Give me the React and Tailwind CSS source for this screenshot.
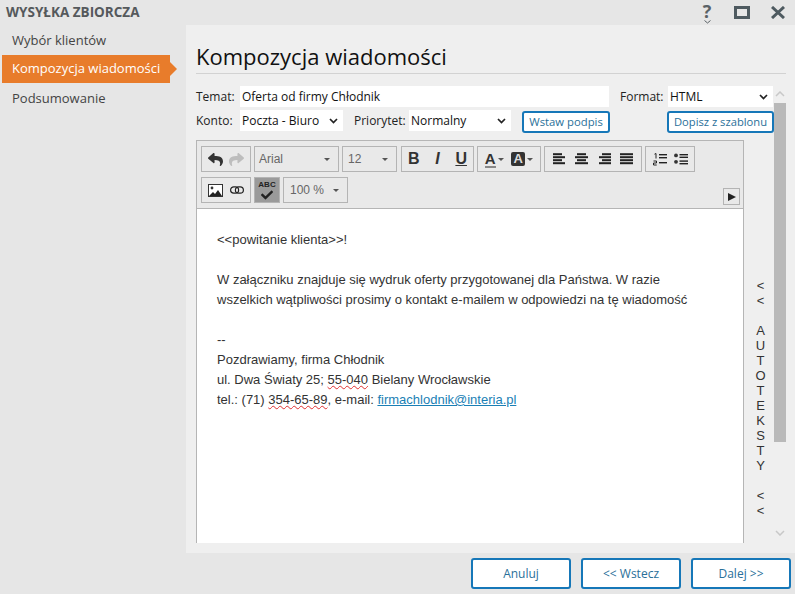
import React from "react";
import { FaReply, FaShare, FaCheck } from "react-icons/fa";

const ui = "font-['Open_Sans',sans-serif]";

const Chevron = ({ className = "" }) => (
  <svg width="9" height="6" viewBox="0 0 9 6" className={className}>
    <path d="M1 1l3.5 3.5L8 1" fill="none" stroke="#222" strokeWidth="1.7" />
  </svg>
);

const Select = ({ value, className }) => (
  <div className={`h-[21px] bg-white flex items-center justify-between pl-[2px] pr-[5px] text-[12px] text-[#111] ${className}`}>
    <span>{value}</span>
    <Chevron />
  </div>
);

const LinkButton = ({ children, className }) => (
  <button className={`bg-white border-2 border-[#1677b8] rounded-[3px] text-[#2a7099] flex items-center justify-center ${className}`}>
    {children}
  </button>
);

const Group = ({ children, className = "" }) => (
  <div className={`h-[26px] border border-[#b4b4b4] flex items-center ${className}`}>{children}</div>
);

const Caret = ({ color = "#555" }) => (
  <svg width="6" height="3" viewBox="0 0 6 3"><path d="M0 0h6L3 3z" fill={color} /></svg>
);

const Drop = ({ label, className }) => (
  <Group className={`justify-between pl-[4px] pr-[8px] text-[12px] text-[#666] font-['Liberation_Sans',sans-serif] ${className}`}>
    <span>{label}</span>
    <Caret />
  </Group>
);

// four bars, offsets differ per alignment
const AlignIcon = ({ bars }) => (
  <svg width="13" height="12" viewBox="0 0 13 12">
    {bars.map(([x, w], i) => (
      <rect key={i} x={x} y={i * 3 + 0.2} width={w} height="2" fill="#222" />
    ))}
  </svg>
);

const ImageIcon = () => (
  <svg width="15" height="13" viewBox="0 0 15 13">
    <rect x="0.5" y="0.5" width="14" height="12" fill="#fff" stroke="#333" />
    <circle cx="4" cy="4" r="1.4" fill="#333" />
    <path d="M1 12l4-4 2 2 3-4 4 6z" fill="#222" />
  </svg>
);

const LinkIcon = () => (
  <svg width="14" height="8" viewBox="0 0 14 8" fill="none" stroke="#222" strokeWidth="1.2">
    <rect x="0.6" y="0.8" width="8" height="6.4" rx="3.2" />
    <rect x="5.4" y="0.8" width="8" height="6.4" rx="3.2" />
  </svg>
);

const NumList = () => (
  <svg width="14" height="13" viewBox="0 0 14 13">
    <path d="M1.5 1.2L3 .5v5" fill="none" stroke="#222" strokeWidth="1" />
    <path d="M.5 8h3v2h-3v2h3.2" fill="none" stroke="#222" strokeWidth="1" />
    <rect x="6" y="1" width="8" height="1.4" fill="#222" />
    <rect x="6" y="4" width="8" height="1.4" fill="#222" />
    <rect x="6" y="9" width="8" height="1.4" fill="#222" />
  </svg>
);

const BulList = () => (
  <svg width="14" height="12" viewBox="0 0 14 12">
    <circle cx="2" cy="2.4" r="1.9" fill="#333" />
    <circle cx="2" cy="8.8" r="1.9" fill="#333" />
    <rect x="5.5" y="1" width="8.5" height="1.4" fill="#222" />
    <rect x="5.5" y="3.6" width="8.5" height="1.4" fill="#222" />
    <rect x="5.5" y="7.4" width="8.5" height="1.4" fill="#222" />
    <rect x="5.5" y="10" width="8.5" height="1.4" fill="#222" />
  </svg>
);

const sideText = ["<", "<", "", "A", "U", "T", "O", "T", "E", "K", "S", "T", "Y", "", "<", "<"];

export default function App() {
  return (
    <div className={`w-[795px] h-[594px] overflow-hidden bg-[#e6e6e6] flex flex-col ${ui}`}>
      <div className="h-[25px] flex items-center justify-between pl-[6px] pr-[10px] shrink-0">
        <span className="text-[13.5px] font-bold text-[#55595c]">WYSYŁKA ZBIORCZA</span>
        <div className="flex items-center">
          <div className="w-[14px] flex flex-col items-center mr-[20px]">
            <span className="text-[18px] leading-[18px] font-bold text-[#5a6266]">?</span>
            <svg width="7" height="4" viewBox="0 0 7 4"><path d="M.5.5l3 2.5 3-2.5" fill="none" stroke="#5a6266" /></svg>
          </div>
          <div className="w-[16px] h-[13px] border-[3px] border-[#4e5a60] mr-[21px]" />
          <svg width="14" height="13" viewBox="0 0 14 13"><path d="M1 1l12 11M13 1L1 12" stroke="#4e5a60" strokeWidth="3" /></svg>
        </div>
      </div>

      <div className="flex-1 min-h-0 flex">
        <nav className="w-[186px] shrink-0 pt-[2px] text-[13px] text-[#444]">
          <div className="h-[28px] pl-[12px] flex items-center">Wybór klientów</div>
          <div className="relative h-[28px] ml-[2px] w-[168px] pl-[10px] flex items-center bg-[#e87c2b] text-white">
            Kompozycja wiadomości
            <span className="absolute left-full top-[7px] border-y-[7px] border-y-transparent border-l-[7px] border-l-[#e87c2b]" />
          </div>
          <div className="h-[32px] pl-[12px] flex items-center">Podsumowanie</div>
        </nav>

        <main className="flex-1 bg-[#efefef] pl-[10px] pr-[9px] flex flex-col min-w-0 overflow-hidden">
          <h1 className="h-[49px] pt-[14px] text-[22px] leading-[34px] text-[#111] border-b border-[#d2d2d2] shrink-0">
            Kompozycja wiadomości
          </h1>

          <div className="flex flex-1 min-h-0 pt-[12px]">
            <div className="w-[578px] flex flex-col">
              <div className="flex items-center text-[12px] text-[#222] h-[21px]">
                <span className="w-[44px]">Temat:</span>
                <div className="w-[369px] h-[21px] bg-white pl-[2px] flex items-center text-[#111]">Oferta od firmy Chłodnik</div>
                <span className="ml-[11px] w-[48px]">Format:</span>
                <Select value="HTML" className="w-[105px]" />
              </div>
              <div className="flex items-start text-[12px] text-[#222] mt-[3px] h-[30px]">
                <span className="w-[44px] leading-[21px]">Konto:</span>
                <Select value="Poczta - Biuro" className="w-[103px]" />
                <span className="ml-[11px] w-[55px] leading-[21px]">Priorytet:</span>
                <Select value="Normalny" className="w-[102px]" />
                <LinkButton className="ml-[11px] w-[88px] h-[22px] mt-[1px] text-[11.3px]">Wstaw podpis</LinkButton>
                <LinkButton className="ml-[57px] w-[107px] h-[22px] mt-[1px] text-[11.2px]">Dopisz z szablonu</LinkButton>
              </div>

              <div className="flex flex-1 min-h-0">
                <div className="w-[548px] border-x border-t border-[#b5b5b5] flex flex-col">
                  <div className="h-[68px] bg-[#e9e9e9] border-b border-[#b5b5b5] pt-[5px] pl-[4px] pr-[3px] shrink-0 font-['Liberation_Sans',sans-serif]">
                    <div className="flex gap-[3px]">
                      <Group className="w-[50px] justify-around px-[3px] text-[#333]">
                        <FaReply size={15} />
                        <FaShare size={15} className="text-[#bdbdbd]" />
                      </Group>
                      <Drop label="Arial" className="w-[85px]" />
                      <Drop label="12" className="w-[55px] !pl-[5px]" />
                      <Group className="w-[73px] ml-[1px] text-[16px] text-[#333]">
                        <span className="w-[24px] text-center font-bold">B</span>
                        <span className="w-[24px] text-center font-bold italic">I</span>
                        <span className="w-[24px] text-center font-bold underline">U</span>
                      </Group>
                      <Group className="w-[64px] justify-around px-[3px]">
                        <span className="flex items-center gap-[2px]">
                          <span className="text-[15px] leading-[15px] font-bold text-[#333] border-b-2 border-[#888]">A</span>
                          <Caret />
                        </span>
                        <span className="flex items-center gap-[2px]">
                          <span className="w-[14px] h-[14px] rounded-[2px] bg-[#333] text-[#ddd] text-[13px] leading-[14px] font-bold text-center">A</span>
                          <Caret />
                        </span>
                      </Group>
                      <Group className="w-[98px] justify-around px-[3px]">
                        <AlignIcon bars={[[0, 9], [0, 12], [0, 9], [0, 12]]} />
                        <AlignIcon bars={[[2, 9], [0, 13], [2, 9], [0, 13]]} />
                        <AlignIcon bars={[[4, 9], [1, 12], [4, 9], [1, 12]]} />
                        <AlignIcon bars={[[0, 13], [0, 13], [0, 13], [0, 13]]} />
                      </Group>
                      <Group className="w-[50px] justify-around px-[3px]">
                        <NumList />
                        <BulList />
                      </Group>
                    </div>
                    <div className="flex gap-[3px] mt-[5px]">
                      <Group className="w-[50px] justify-around px-[3px]">
                        <ImageIcon />
                        <LinkIcon />
                      </Group>
                      <Group className="w-[26px] justify-center bg-[#9a9a9a] border-[#777] relative">
                        <span className="absolute top-[2px] w-full text-center text-[8px] leading-[9px] font-bold text-[#222]">ABC</span>
                        <FaCheck size={12} className="text-[#222] mt-[9px]" />
                      </Group>
                      <Drop label="100 %" className="w-[65px] !pl-[6px]" />
                      <div className="ml-auto self-end w-[17px] h-[17px] border border-[#b4b4b4] flex items-center justify-center translate-y-[2px]">
                        <svg width="8" height="8" viewBox="0 0 8 8"><path d="M0 0l8 4-8 4z" fill="#222" /></svg>
                      </div>
                    </div>
                  </div>
                  <div className="flex-1 bg-white pl-[20px] pt-[21px] text-[13px] leading-[20px] text-[#333] font-['Liberation_Sans',sans-serif]">
                    <p>&lt;&lt;powitanie klienta&gt;&gt;!</p>
                    <p className="mt-[20px]">W załączniku znajduje się wydruk oferty przygotowanej dla Państwa. W razie</p>
                    <p>wszelkich wątpliwości prosimy o kontakt e-mailem w odpowiedzi na tę wiadomość</p>
                    <p className="mt-[20px]">--</p>
                    <p>Pozdrawiamy, firma Chłodnik</p>
                    <p>
                      ul. Dwa Światy 25; <span className="underline decoration-wavy decoration-[#e03030] decoration-1">55-040</span> Bielany Wrocławskie
                    </p>
                    <p>
                      tel.: (71) <span className="underline decoration-wavy decoration-[#e03030] decoration-1">354-65-89</span>, e-mail:{" "}
                      <a className="text-[#1a7fb5] underline">firmachlodnik@interia.pl</a>
                    </p>
                  </div>
                </div>
                <div className="flex-1 flex flex-col items-center pl-[3px] pt-[138px] text-[13px] leading-[15px] text-[#333] font-['Liberation_Sans',sans-serif]">
                  {sideText.map((c, i) => (
                    <span key={i} className="h-[15px]">{c}</span>
                  ))}
                </div>
              </div>
            </div>

            <div className="w-[12px] flex flex-col items-center">
              <svg width="10" height="6" viewBox="0 0 10 6" className="mt-[5px]"><path d="M1 5l4-4 4 4" fill="none" stroke="#c8c8c8" strokeWidth="1.5" /></svg>
              <div className="w-[12px] h-[339px] bg-[#b9b9b9] mt-[6px] mb-auto" />
              <svg width="10" height="6" viewBox="0 0 10 6" className="mb-[7px]"><path d="M1 1l4 4 4-4" fill="none" stroke="#c8c8c8" strokeWidth="1.5" /></svg>
            </div>
          </div>
          <div className="h-[10px] shrink-0" />
        </main>
      </div>

      <footer className="h-[41px] shrink-0 flex justify-end gap-[10px] pt-[5px] pr-[4px] pb-[5px] text-[12px]">
        <LinkButton className="w-[100px]">Anuluj</LinkButton>
        <LinkButton className="w-[100px]">&lt;&lt; Wstecz</LinkButton>
        <LinkButton className="w-[100px]">Dalej &gt;&gt;</LinkButton>
      </footer>
    </div>
  );
}
